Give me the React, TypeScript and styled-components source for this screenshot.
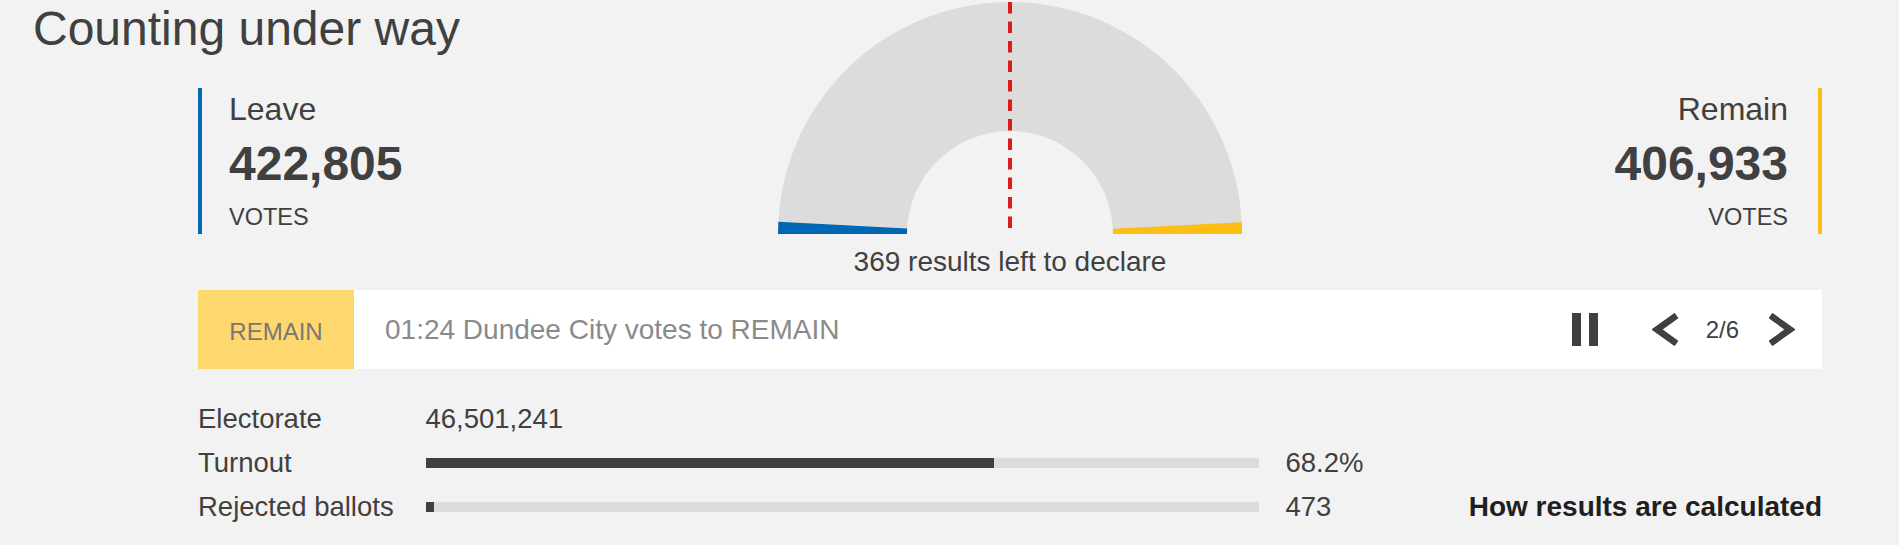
import React from "react";
import styled, { createGlobalStyle } from "styled-components";

const GlobalStyle = createGlobalStyle`
  html, body { margin: 0; padding: 0; background: #f2f2f2; }
  body { font-family: "Liberation Sans", Arial, sans-serif; color: #404040; }
  * { box-sizing: border-box; }
`;

const Page = styled.div`
  display: grid;
  grid-template-columns: 165px 580px 464px 580px;
  grid-template-rows: 88px auto;
  align-content: start;
  padding-left: 33px;
  width: 1899px;
  height: 545px;
  overflow: hidden;
`;

const Title = styled.h1`
  grid-column: 1 / 3;
  grid-row: 1;
  margin: 0;
  font-size: 48px;
  line-height: 57.6px;
  font-weight: 400;
  color: #404040;
  white-space: nowrap;
`;

const Side = styled.div<{ $side: "left" | "right"; $color: string }>`
  grid-row: 2;
  grid-column: ${(p) => (p.$side === "left" ? 2 : 4)};
  justify-self: ${(p) => (p.$side === "left" ? "start" : "end")};
  align-self: start;
  height: 146px;
  padding-top: 3px;
  text-align: ${(p) => p.$side};
  ${(p) =>
    p.$side === "left"
      ? `border-left: 4px solid ${p.$color}; padding-left: 27px;`
      : `border-right: 4px solid ${p.$color}; padding-right: 30px;`}
`;

const SideLabel = styled.div`
  font-size: 32px;
  line-height: 36px;
`;

const SideNumber = styled.div`
  margin-top: 13px;
  font-size: 48px;
  line-height: 48px;
  font-weight: 700;
`;

const SideUnit = styled.div`
  margin-top: 18px;
  font-size: 23.5px;
  line-height: 23px;
  text-transform: uppercase;
`;

const GaugeColumn = styled.div`
  grid-column: 3;
  grid-row: 1 / 3;
  padding-top: 2px;
  display: flex;
  flex-direction: column;
  align-items: center;
`;

const GaugeSvg = styled.svg`
  display: block;
  width: 464px;
  height: 232px;
`;

const Caption = styled.div`
  margin-top: 12px;
  font-size: 28px;
  line-height: 32px;
  white-space: nowrap;
`;

const Ticker = styled.div`
  grid-column: 2 / 5;
  margin-top: 12px;
  height: 79px;
  background: #ffffff;
  display: flex;
  align-items: center;
`;

const TickerTag = styled.div`
  width: 156px;
  height: 100%;
  background: #ffd76f;
  color: #787878;
  font-size: 24px;
  padding-top: 4px;
  display: flex;
  align-items: center;
  justify-content: center;
`;

const TickerText = styled.div`
  flex: 1;
  padding-left: 31px;
  font-size: 28px;
  color: #8a8a8a;
  white-space: nowrap;
`;

const Controls = styled.div`
  display: flex;
  align-items: center;
  padding-right: 27px;
`;

const IconButton = styled.button<{ $gap?: number }>`
  border: 0;
  padding: 0;
  margin: 0 0 0 ${(p) => p.$gap ?? 0}px;
  background: none;
  display: flex;
  cursor: pointer;
`;

const Pager = styled.span`
  margin-left: 28px;
  margin-right: 30px;
  font-size: 24px;
  color: #404040;
`;

const Stats = styled.div`
  grid-column: 2 / 5;
  margin-top: 27.5px;
  display: grid;
  grid-template-columns: 227.5px 833px auto 1fr auto;
  grid-auto-rows: 44px;
  align-items: center;
  font-size: 27.5px;
  line-height: 44px;
  color: #404040;
`;

const StatLabel = styled.div`
  grid-column: 1;
  white-space: nowrap;
`;

const StatValue = styled.div<{ $col?: string }>`
  grid-column: ${(p) => p.$col ?? "3"};
  padding-left: ${(p) => (p.$col ? 0 : 27)}px;
  white-space: nowrap;
`;

const Track = styled.div`
  grid-column: 2;
  height: 10px;
  background: #dcdcdc;
  display: flex;
`;

const Fill = styled.div`
  height: 100%;
  background: #404040;
`;

const HowLink = styled.a`
  grid-column: 5;
  font-size: 28px;
  font-weight: 700;
  color: #1f1f1f;
  text-decoration: none;
  white-space: nowrap;
`;

const R = 232;
const r = 103;
const cx = 232;
const cy = 232;

function wedge(deg: number, fromLeft: boolean) {
  const a = (deg * Math.PI) / 180;
  const sx = fromLeft ? -1 : 1;
  const ox = cx + sx * R * Math.cos(a);
  const oy = cy - R * Math.sin(a);
  const ix = cx + sx * r * Math.cos(a);
  const iy = cy - r * Math.sin(a);
  return `M${cx + sx * R},${cy} L${ox},${oy} L${ix},${iy} L${cx + sx * r},${cy} Z`;
}

const Chevron = ({ dir }: { dir: "left" | "right" }) => (
  <svg width="26" height="33" viewBox="0 0 26 33">
    <polyline
      points={dir === "left" ? "24.5,2.5 5,16.5 24.5,30.5" : "1.5,2.5 21,16.5 1.5,30.5"}
      fill="none"
      stroke="#404040"
      strokeWidth="6.5"
      strokeLinejoin="miter"
      strokeMiterlimit="4"
    />
  </svg>
);

const Pause = () => (
  <svg width="26" height="33" viewBox="0 0 26 33">
    <rect x="0" y="0" width="9" height="33" fill="#404040" />
    <rect x="17" y="0" width="9" height="33" fill="#404040" />
  </svg>
);

export default function App() {
  const leave = 422805;
  const remain = 406933;
  const leaveDeg = 3;
  const remainDeg = (remain / leave) * leaveDeg;
  const turnout = 68.2;

  return (
    <>
      <GlobalStyle />
      <Page>
        <Title>Counting under way</Title>

        <Side $side="left" $color="#0068b3">
          <SideLabel>Leave</SideLabel>
          <SideNumber>{leave.toLocaleString("en-GB")}</SideNumber>
          <SideUnit>Votes</SideUnit>
        </Side>

        <GaugeColumn>
          <GaugeSvg viewBox="0 0 464 232">
            <path
              d={`M0,232 A${R},${R} 0 0 1 464,232 L${cx + r},232 A${r},${r} 0 0 0 ${cx - r},232 Z`}
              fill="#dcdcdc"
            />
            <path d={wedge(leaveDeg, true)} fill="#0068b3" />
            <path d={wedge(remainDeg, false)} fill="#fdbe14" />
            <line
              x1="232"
              y1="0"
              x2="232"
              y2="227"
              stroke="#dc1c1c"
              strokeWidth="4"
              strokeDasharray="11.5 8"
            />
          </GaugeSvg>
          <Caption>369 results left to declare</Caption>
        </GaugeColumn>

        <Side $side="right" $color="#fdbe14">
          <SideLabel>Remain</SideLabel>
          <SideNumber>{remain.toLocaleString("en-GB")}</SideNumber>
          <SideUnit>Votes</SideUnit>
        </Side>

        <Ticker>
          <TickerTag>REMAIN</TickerTag>
          <TickerText>01:24 Dundee City votes to REMAIN</TickerText>
          <Controls>
            <IconButton aria-label="Pause">
              <Pause />
            </IconButton>
            <IconButton $gap={54} aria-label="Previous">
              <Chevron dir="left" />
            </IconButton>
            <Pager>2/6</Pager>
            <IconButton aria-label="Next">
              <Chevron dir="right" />
            </IconButton>
          </Controls>
        </Ticker>

        <Stats>
          <StatLabel>Electorate</StatLabel>
          <StatValue $col="2">46,501,241</StatValue>

          <StatLabel>Turnout</StatLabel>
          <Track>
            <Fill style={{ width: `${turnout}%` }} />
          </Track>
          <StatValue>68.2%</StatValue>

          <StatLabel>Rejected ballots</StatLabel>
          <Track>
            <Fill style={{ width: "8px" }} />
          </Track>
          <StatValue>473</StatValue>
          <HowLink href="#">How results are calculated</HowLink>
        </Stats>
      </Page>
    </>
  );
}
